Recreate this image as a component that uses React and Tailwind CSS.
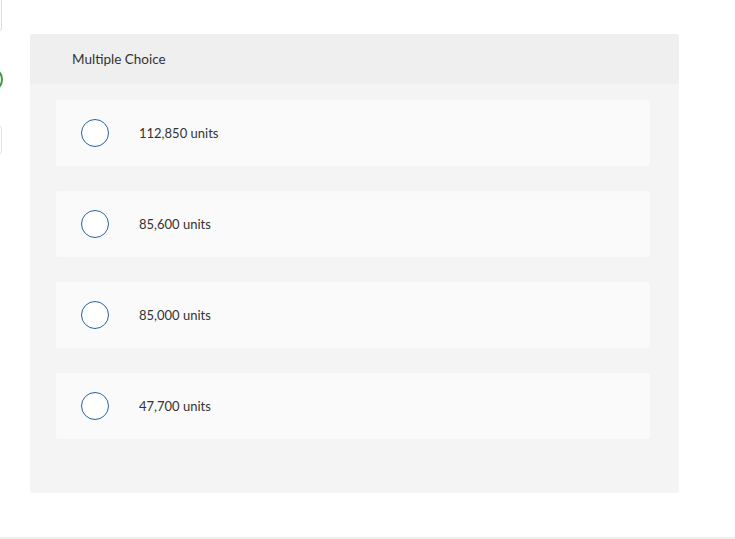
export default function App() {
  var options = ['112,850 units', '85,600 units', '85,000 units', '47,700 units']

  return (
    <div className="relative w-[735px] h-[539px] bg-white overflow-hidden border-b-2 border-[#efefef]" style={{ fontFamily: 'Lato, "Open Sans", sans-serif' }}>
      {/* cut-off controls at the left edge */}
      <div className="absolute left-[-40px] top-[-6px] w-[42px] h-[38px] rounded-[4px] border border-[#dcdcdc] bg-white"></div>
      <div className="absolute left-[-22px] top-[67px] w-[25px] h-[25px] rounded-full border-2 border-[#3c9a3c] bg-white"></div>
      <div className="absolute left-[-40px] top-[125px] w-[42px] h-[30px] rounded-[4px] border border-[#e2e2e2] bg-white"></div>

      <div className="pt-[34px] pl-[30px]">
        <div className="w-[649px] h-[459px] rounded-[3px] bg-[#f4f4f4] overflow-hidden flex flex-col">
          <div className="h-[50px] bg-[#efefef] pl-[42px] flex items-center text-[13.5px] text-[#333]">Multiple Choice</div>
          <div className="pt-[16px] pl-[26px] pr-[29px] flex flex-col gap-[25px]">
            {options.map(o => (
              <div key={o} className="h-[66px] rounded-[3px] bg-[#fafafa] flex items-center gap-[30px] pl-[25px]">
                <span className="w-[28px] h-[28px] rounded-full border-[1.5px] border-[#2563a6] bg-white"></span>
                <span className="text-[13px] text-[#333] pt-[2px]">{o}</span>
              </div>
            ))}
          </div>
        </div>
      </div>
    </div>
  )
}
